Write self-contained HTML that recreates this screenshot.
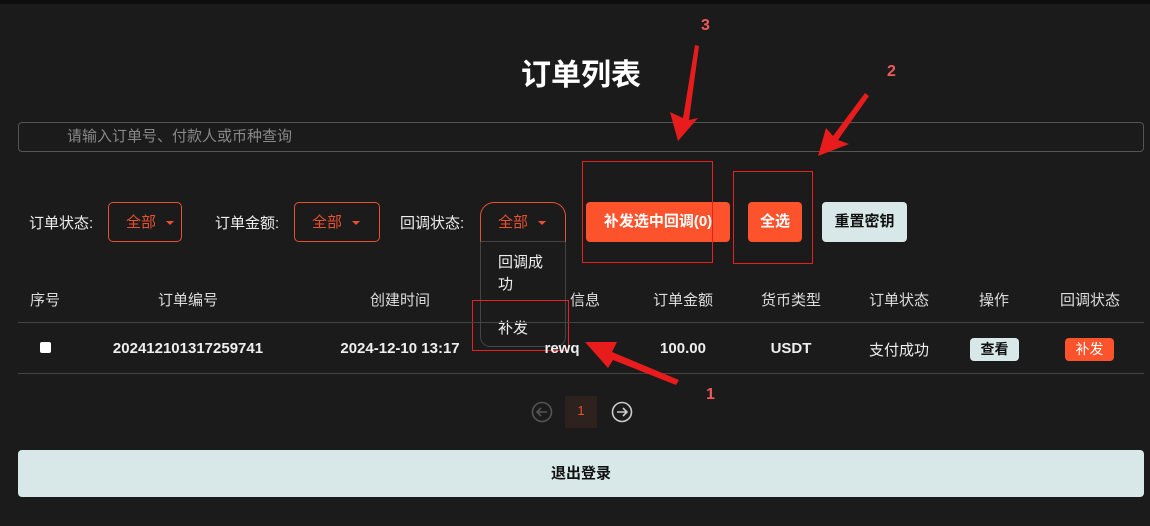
<!DOCTYPE html><html><head><meta charset="utf-8"><style>
*{margin:0;padding:0;box-sizing:border-box}
body{width:1150px;height:526px;background:#1b1b1b;font-family:"Liberation Sans","Noto Sans CJK SC",sans-serif;color:#eee;position:relative;overflow:hidden}
.a{position:absolute}
.sel{position:absolute;top:202px;height:40px;border:1px solid #e8502e;border-radius:5px;color:#e8502e;font-size:15px;line-height:40px;padding-left:17px}
.sel i{display:inline-block;width:0;height:0;border:4px solid transparent;border-top:4px solid #e8502e;margin-left:10px;vertical-align:middle;margin-top:3px}
.lbl{position:absolute;top:212px;font-size:15px;color:#eee}
.btn{position:absolute;border-radius:4px;font-weight:bold;font-size:15px;text-align:center}
.th{position:absolute;top:289px;font-size:15px;color:#ddd;transform:translateX(-50%);white-space:nowrap}
.td{position:absolute;top:340px;font-size:15px;color:#eee;font-weight:bold;transform:translateX(-50%);white-space:nowrap}
.num{position:absolute;color:#f05a5a;font-size:16px;font-weight:bold}
</style></head><body>
<div class="a" style="left:0;top:0;width:1150px;height:4px;background:#0e0e0e"></div>
<div class="a" style="left:6px;top:50px;width:1150px;text-align:center;font-size:30px;font-weight:bold;color:#fff">订单列表</div>
<div class="a" style="left:18px;top:122px;width:1126px;height:30px;border:1px solid #555;border-radius:4px;font-size:15px;color:#888;line-height:28px;padding-left:48px">请输入订单号、付款人或币种查询</div>
<div class="lbl" style="left:29px">订单状态:</div>
<div class="sel" style="left:108px;width:74px">全部<i></i></div>
<div class="lbl" style="left:215px">订单金额:</div>
<div class="sel" style="left:294px;width:86px">全部<i></i></div>
<div class="lbl" style="left:400px">回调状态:</div>
<div class="sel" style="left:480px;width:86px;border-radius:14px 14px 0 0;border-bottom-color:#444">全部<i></i></div>
<div class="a" style="left:480px;top:242px;width:86px;height:105px;border:1px solid #444;border-top:none;border-radius:0 0 10px 10px;background:#1b1b1b;font-size:15px;color:#eee">
<div style="position:absolute;left:17px;top:10px;line-height:22px;width:55px">回调成功</div>
<div style="position:absolute;left:17px;top:75px">补发</div></div>
<div class="btn" style="left:586px;top:202px;width:144px;height:40px;line-height:40px;background:#fc532c;color:#fff">补发选中回调(0)</div>
<div class="btn" style="left:748px;top:202px;width:54px;height:40px;line-height:40px;background:#fc532c;color:#fff">全选</div>
<div class="btn" style="left:822px;top:202px;width:85px;height:40px;line-height:40px;background:#d8e8e8;color:#111">重置密钥</div>
<div class="a" style="left:582px;top:161px;width:131px;height:102px;border:1px solid #e82020"></div>
<div class="a" style="left:733px;top:171px;width:80px;height:93px;border:1px solid #e82020"></div>
<div class="a" style="left:472px;top:300px;width:97px;height:51px;border:1px solid #e82020"></div>
<div class="th" style="left:45px">序号</div><div class="th" style="left:188px">订单编号</div><div class="th" style="left:400px">创建时间</div><div class="th" style="left:585px">信息</div><div class="th" style="left:683px">订单金额</div><div class="th" style="left:791px">货币类型</div><div class="th" style="left:899px">订单状态</div><div class="th" style="left:994px">操作</div><div class="th" style="left:1090px">回调状态</div>
<div class="a" style="left:18px;top:322px;width:1126px;height:1px;background:#444"></div>
<div class="a" style="left:40px;top:342px;width:11px;height:11px;background:#fff;border-radius:2px"></div>
<div class="td" style="left:188px">202412101317259741</div><div class="td" style="left:400px">2024-12-10 13:17</div><div class="td" style="left:562px">rewq</div><div class="td" style="left:683px">100.00</div><div class="td" style="left:791px">USDT</div><div class="td" style="left:899px;font-weight:normal;top:339px">支付成功</div>
<div class="btn" style="left:970px;top:338px;width:49px;height:23px;line-height:23px;background:#d8e8e8;color:#111;font-size:14px">查看</div>
<div class="btn" style="left:1065px;top:338px;width:49px;height:23px;line-height:23px;background:#fc532c;color:#fff;font-size:14px;font-weight:normal">补发</div>
<div class="a" style="left:18px;top:373px;width:1126px;height:1px;background:#444"></div>
<svg class="a" style="left:530px;top:400px" width="24" height="24"><circle cx="12" cy="12" r="9.5" fill="none" stroke="#555" stroke-width="1.6"/><path d="M17 12H7M11 8l-4 4 4 4" fill="none" stroke="#555" stroke-width="1.6"/></svg>
<div class="a" style="left:565px;top:396px;width:32px;height:32px;background:#2e221e;color:#e8502e;font-size:13px;text-align:center;line-height:30px">1</div>
<svg class="a" style="left:610px;top:400px" width="24" height="24"><circle cx="12" cy="12" r="9.5" fill="none" stroke="#ccc" stroke-width="1.6"/><path d="M7 12h10M13 8l4 4-4 4" fill="none" stroke="#ccc" stroke-width="1.6"/></svg>
<div class="btn" style="left:18px;top:450px;width:1126px;height:47px;line-height:47px;background:#d8e8e8;color:#111;border-radius:4px">退出登录</div>
<svg class="a" style="left:0;top:0" width="1150" height="526">
<polygon points="695,45 699,46 689,120 698,118 678,141 670,112 683,118" fill="#e81c1c"/>
<polygon points="865,93 869,96 838,140 849,144 818,156 826,128 833,136" fill="#e81c1c"/>
<polygon points="679,380 676,385 613,360 608,368 585,342 617,342 612,352" fill="#e81c1c"/>
</svg>
<div class="num" style="left:701px;top:17px">3</div>
<div class="num" style="left:887px;top:63px">2</div>
<div class="num" style="left:706px;top:386px">1</div>
</body></html>
